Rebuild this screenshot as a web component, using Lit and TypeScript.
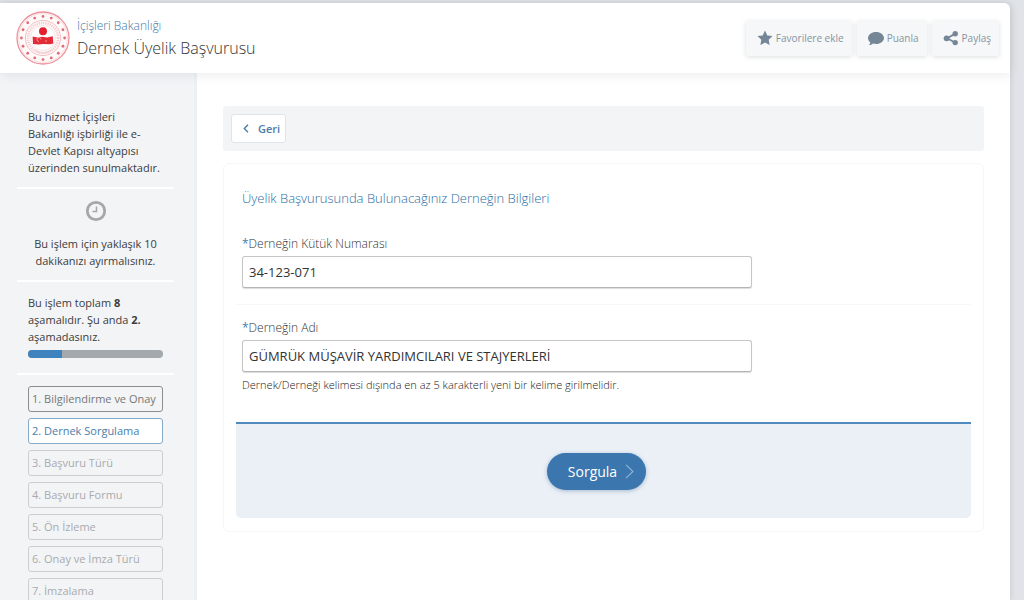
import { LitElement, html, css, svg } from "lit";
import { customElement, property, state } from "lit/decorators.js";
import { classMap } from "lit/directives/class-map.js";

@customElement("ministry-emblem")
class MinistryEmblem extends LitElement {
  static styles = css`
    :host { display: block; flex: none; }
    svg { display: block; width: 54px; height: 54px; }
  `;
  render() {
    const dots = Array.from({ length: 16 }, (_, i) => {
      const a = (i * Math.PI) / 8;
      return svg`<circle cx=${27 + 21.6 * Math.sin(a)} cy=${27 - 21.6 * Math.cos(a)} r="1.4" fill="#e06a7a" />`;
    });
    return html`
      <svg viewBox="0 0 54 54" role="img" aria-label="Amblem">
        <circle cx="27" cy="27" r="26" fill="#fffafa" stroke="#ec929b" stroke-width="1.3" />
        <circle cx="27" cy="27" r="24.4" fill="none" stroke="#f8d3d6" stroke-width="0.8" />
        ${dots}
        <circle cx="27" cy="27" r="17.6" fill="none" stroke="#f3bfc4" stroke-width="1" />
        <circle cx="27" cy="27" r="15" fill="none" stroke="#f4cccf" stroke-width="2.6" stroke-dasharray="1.2 1" />
        <circle cx="27" cy="27" r="12.4" fill="#fff" stroke="#f8dadc" stroke-width="0.8" />
        <path d="M19 39q8 6 16 0" fill="none" stroke="#f4cccf" stroke-width="1.2" />
        <circle cx="27" cy="20.2" r="4" fill="#e3202f" />
        <path d="M16.600 25.400l4.900 1.200 4.500-.8 5 .8 5.800-1.400.5 7.400-3.300.7-6.500-.3-5 .5-5.500-.5z" fill="#e32b38" />
        <path d="M23 30.500a2 2 0 1 1 2-2M29 30h2" fill="none" stroke="#f6a3a9" stroke-width="0.8" />
      </svg>
    `;
  }
}

@customElement("service-header")
class ServiceHeader extends LitElement {
  static styles = css`
    :host {
      display: flex;
      align-items: center;
      gap: 7px;
      height: 70px;
      padding: 0 11px 0 16px;
      box-sizing: border-box;
      background: #fff;
      border-top-right-radius: 6px;
      box-shadow: 0 2px 12px rgba(60, 70, 80, 0.1);
      position: relative;
    }
    .titles { flex: 1; margin: 0; padding-top: 2px; font-weight: 300; }
    .org { display: block; font-size: 12px; line-height: 18px; color: #4077a8; }
    .service { display: block; font-size: 16px; line-height: 26px; color: #333; }
    .actions { display: flex; gap: 5px; }
    .action {
      display: flex;
      align-items: center;
      gap: 3px;
      height: 35px;
      padding: 0 8px 0 11px;
      border: 0;
      border-radius: 3px;
      background: #f6f7f9;
      box-shadow: 0 1px 5px rgba(60, 70, 80, 0.18);
      font: 400 10px/16px "Open Sans", sans-serif;
      color: #8595a1;
    }
    .action svg { width: 16px; height: 16px; fill: #758796; }
  `;
  render() {
    return html`
      <ministry-emblem></ministry-emblem>
      <h1 class="titles">
        <span class="org">İçişleri Bakanlığı</span>
        <span class="service">Dernek Üyelik Başvurusu</span>
      </h1>
      <div class="actions">
        <button class="action" type="button">
          <svg viewBox="0 0 16 16"><path d="M8 .6l2.3 4.8 5.2.7-3.8 3.7.9 5.3L8 12.6l-4.6 2.5.9-5.3L.5 6.1l5.2-.7z" /></svg>
          Favorilere ekle
        </button>
        <button class="action" type="button">
          <svg viewBox="0 0 16 16"><path d="M8 2c4.400 0 8 2.700 8 6s-3.600 6-8 6c-1 0-2-.15-2.900-.4C3.900 14.600 2.500 15.300.8 15.300c.9-.9 1.400-1.900 1.500-2.900C.9 11.300 0 9.700 0 8c0-3.300 3.600-6 8-6z" /></svg>
          Puanla
        </button>
        <button class="action" type="button">
          <svg viewBox="0 0 16 16">
            <path d="M4 8.300l8-4.400M4 8.300l8 4.200" stroke="#758796" stroke-width="1.800" />
            <circle cx="3.600" cy="8.300" r="2.900" /><circle cx="12.200" cy="3.800" r="2.700" /><circle cx="12.200" cy="12.600" r="2.700" />
          </svg>
          Paylaş
        </button>
      </div>
    `;
  }
}

@customElement("step-sidebar")
class StepSidebar extends LitElement {
  @property({ type: Number }) current = 2;
  @property({ type: Number }) total = 8;

  private steps = [
    "Bilgilendirme ve Onay",
    "Dernek Sorgulama",
    "Başvuru Türü",
    "Başvuru Formu",
    "Ön İzleme",
    "Onay ve İmza Türü",
    "İmzalama",
  ];

  static styles = css`
    :host {
      display: block;
      width: 197px;
      flex: none;
      box-sizing: border-box;
      padding: 35px 20px 0 17px;
      background: #f2f4f6;
      border-right: 3px solid #eef1f3;
      font-size: 11px;
      line-height: 17px;
      color: #3c3c3c;
    }
    .block { padding: 0 11px 11px; border-bottom: 2px solid #fff; }
    .block p { margin: 0; }
    .time { padding: 11px 11px 11px; text-align: center; }
    .time svg { display: block; width: 22px; height: 22px; margin: 0 auto 13px; }
    .progress { padding: 12px 11px 15px; }
    .bar { height: 8px; margin-top: 5px; border-radius: 4px; overflow: hidden; background: #a3a9ac; }
    .fill { height: 100%; background: #3f83be; }
    .steps { list-style: none; display: grid; gap: 6px; margin: 0; padding: 11px 11px 0; }
    .step {
      height: 26px;
      box-sizing: border-box;
      padding: 4px 3px;
      border: 1px solid #ccced0;
      border-radius: 3px;
      white-space: nowrap;
      line-height: 16px;
      color: #a9abae;
    }
    .done { border-color: #8b8d8f; color: #777; }
    .active { border-color: #85aac9; background: #fff; color: #4a7daa; }
  `;
  render() {
    return html`
      <div class="block">
        <p>Bu hizmet İçişleri Bakanlığı işbirliği ile e-Devlet Kapısı altyapısı üzerinden sunulmaktadır.</p>
      </div>
      <div class="block time">
        <svg viewBox="0 0 22 22" fill="none">
          <circle cx="11" cy="11" r="8.700" stroke="#a5a7a9" stroke-width="2.800" />
          <path d="M11.500 6.500v5h-4" stroke="#a5a7a9" stroke-width="1.500" />
        </svg>
        <p>Bu işlem için yaklaşık 10 dakikanızı ayırmalısınız.</p>
      </div>
      <div class="block progress">
        <p>Bu işlem toplam <b>${this.total}</b> aşamalıdır. Şu anda <b>${this.current}.</b> aşamadasınız.</p>
        <div class="bar"><div class="fill" style="width:${(this.current / this.total) * 100}%"></div></div>
      </div>
      <ol class="steps">
        ${this.steps.map(
          (label, i) => html`<li
            class=${classMap({ step: true, done: i + 1 < this.current, active: i + 1 === this.current })}
          >${i + 1}. ${label}</li>`
        )}
      </ol>
    `;
  }
}

@customElement("query-form")
class QueryForm extends LitElement {
  @state() private registry = "34-123-071";
  @state() private associationName = "GÜMRÜK MÜŞAVİR YARDIMCILARI VE STAJYERLERİ";

  static styles = css`
    :host { display: block; }
    .card { margin: 0; padding: 12px 12px 13px; border: 1px solid #f5f6f7; border-radius: 6px; }
    .title { margin: 0; padding: 11px 6px 25px; font-size: 13px; line-height: 22px; font-weight: 300; color: #2a6da3; }
    .field { padding: 0 0 16px 6px; }
    .field + .field { border-top: 1px solid #f8f8f9; padding: 13px 0 29px 6px; }
    .label { display: block; font-size: 12px; line-height: 20px; font-weight: 300; color: #333; padding-bottom: 2px; }
    .star { font-weight: 400; color: #3f7fae; }
    .input {
      display: block;
      width: 70%;
      height: 32px;
      box-sizing: border-box;
      padding: 0 6px;
      border: 1px solid #c6c6c6;
      border-bottom-color: #b5b5b5;
      border-radius: 3px;
      background: #fff;
      box-shadow: 0 1px 1px rgba(0, 0, 0, 0.14);
      font: 400 13px/18px "Open Sans", sans-serif;
      color: #333;
      outline: none;
    }
    .help { margin: 0; padding-top: 4px; font-size: 11px; line-height: 17px; font-weight: 300; color: #222; }
    .footer {
      display: flex;
      justify-content: center;
      padding: 29px 0 28px;
      border-top: 2px solid #4f8bbe;
      border-radius: 0 0 5px 5px;
      background: #ebf0f7;
    }
    .submit {
      display: flex;
      align-items: center;
      gap: 8px;
      height: 37px;
      margin-right: 14px;
      padding: 0 12px 0 21px;
      border: 0;
      border-radius: 19px;
      background: #3b77ae;
      box-shadow: 0 1px 4px rgba(40, 80, 130, 0.35);
      font: 400 14px/20px "Open Sans", sans-serif;
      color: #fff;
    }
    .submit svg { width: 9px; height: 15px; }
  `;
  render() {
    return html`
      <form class="card" @submit=${(e: Event) => e.preventDefault()}>
        <h2 class="title">Üyelik Başvurusunda Bulunacağınız Derneğin Bilgileri</h2>
        <div class="field">
          <label class="label" for="registry"><span class="star">*</span>Derneğin Kütük Numarası</label>
          <input class="input" id="registry" type="text" .value=${this.registry}
            @input=${(e: Event) => (this.registry = (e.target as HTMLInputElement).value)} />
        </div>
        <div class="field">
          <label class="label" for="name"><span class="star">*</span>Derneğin Adı</label>
          <input class="input" id="name" type="text" aria-describedby="name-help" .value=${this.associationName}
            @input=${(e: Event) => (this.associationName = (e.target as HTMLInputElement).value)} />
          <p class="help" id="name-help">Dernek/Derneği kelimesi dışında en az 5 karakterli yeni bir kelime girilmelidir.</p>
        </div>
        <div class="footer">
          <button class="submit" type="submit">
            Sorgula
            <svg viewBox="0 0 9 15" fill="none" stroke="#8db6da" stroke-width="1.100"><path d="M1 .8l7 6.700-7 6.700" /></svg>
          </button>
        </div>
      </form>
    `;
  }
}

@customElement("app-root")
class AppRoot extends LitElement {
  static styles = css`
    :host {
      display: block;
      height: 100vh;
      box-sizing: border-box;
      padding: 3px 14px 0 0;
      overflow: hidden;
      background: #e0e3e7;
      font-family: "Open Sans", "Noto Sans", sans-serif;
    }
    .page {
      display: flex;
      flex-direction: column;
      height: 100%;
      background: #fff;
      border-top-right-radius: 6px;
      box-shadow: 1px 0 5px rgba(60, 70, 80, 0.12);
    }
    .body { display: flex; flex: 1; min-height: 0; }
    .main { flex: 1; min-width: 0; padding: 33px 26px 0; }
    .toolbar { display: flex; padding: 8px; margin-bottom: 12px; background: #f2f4f6; border-radius: 3px; }
    .back {
      display: flex;
      align-items: center;
      gap: 9px;
      height: 29px;
      padding: 0 5px 0 11px;
      border: 1px solid #e1e5e9;
      border-radius: 3px;
      background: #fff;
      font: 600 11px/16px "Open Sans", sans-serif;
      color: #4a7ca6;
    }
    .back svg { width: 6px; height: 9px; }
  `;
  render() {
    return html`
      <div class="page">
        <service-header></service-header>
        <div class="body">
          <step-sidebar></step-sidebar>
          <main class="main">
            <div class="toolbar">
              <button class="back" type="button">
                <svg viewBox="0 0 6 9" fill="none" stroke="#4a7ca6" stroke-width="1.400"><path d="M5 .8L1.300 4.500 5 8.200" /></svg>
                Geri
              </button>
            </div>
            <query-form></query-form>
          </main>
        </div>
      </div>
    `;
  }
}
